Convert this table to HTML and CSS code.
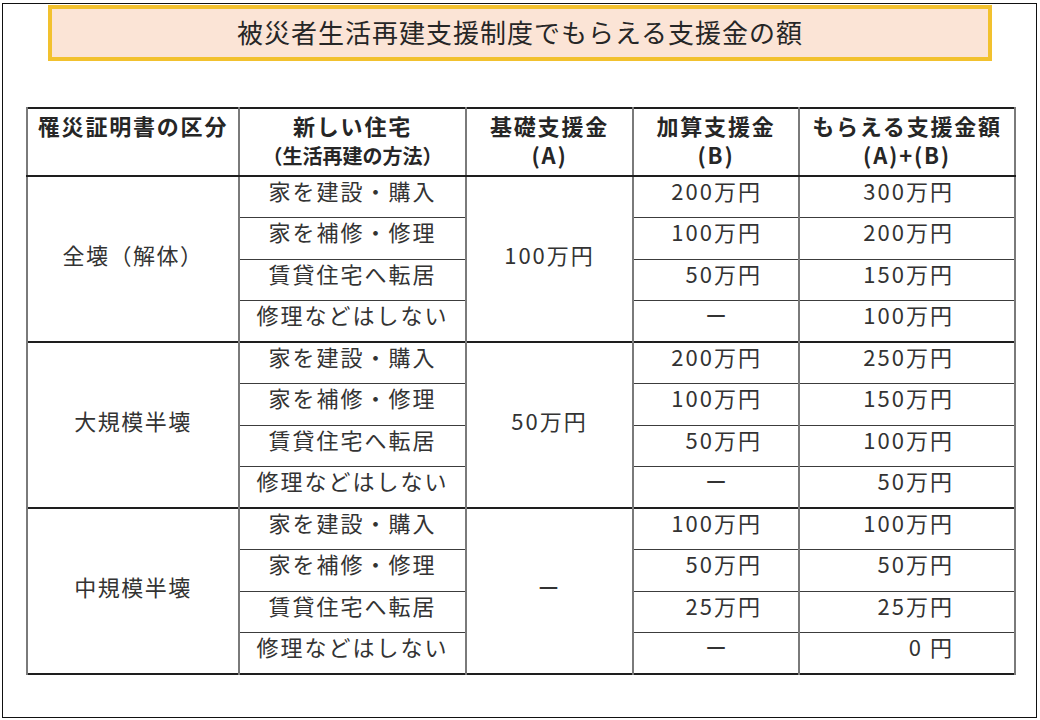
FILE: index.html
```html
<!DOCTYPE html>
<html lang="ja">
<head>
<meta charset="utf-8">
<title>被災者生活再建支援制度でもらえる支援金の額</title>
<link rel="stylesheet" href="styles.css">
</head>
<body>
<div class="frame">
  <div class="title">被災者生活再建支援制度でもらえる支援金の額</div>
  <table class="grid">
    <colgroup>
      <col class="c1"><col class="c2"><col class="c3"><col class="c4"><col class="c5">
    </colgroup>
    <thead>
      <tr>
        <th>罹災証明書の区分</th>
        <th>新しい住宅<br><span class="sub">（生活再建の方法）</span></th>
        <th>基礎支援金<br>(A)</th>
        <th>加算支援金<br>(B)</th>
        <th>もらえる支援金額<br>(A)+(B)</th>
      </tr>
    </thead>
    <tbody>
      <tr class="grp">
        <td class="cat" rowspan="4">全壊（解体）</td>
        <td class="way">家を建設・購入</td>
        <td class="base" rowspan="4">100万円</td>
        <td class="b">200万円</td>
        <td class="ab">300万円</td>
      </tr>
      <tr><td class="way">家を補修・修理</td><td class="b">100万円</td><td class="ab">200万円</td></tr>
      <tr><td class="way">賃貸住宅へ転居</td><td class="b">50万円</td><td class="ab">150万円</td></tr>
      <tr><td class="way">修理などはしない</td><td class="dash">ー</td><td class="ab">100万円</td></tr>

      <tr class="grp">
        <td class="cat" rowspan="4">大規模半壊</td>
        <td class="way">家を建設・購入</td>
        <td class="base" rowspan="4">50万円</td>
        <td class="b">200万円</td>
        <td class="ab">250万円</td>
      </tr>
      <tr><td class="way">家を補修・修理</td><td class="b">100万円</td><td class="ab">150万円</td></tr>
      <tr><td class="way">賃貸住宅へ転居</td><td class="b">50万円</td><td class="ab">100万円</td></tr>
      <tr><td class="way">修理などはしない</td><td class="dash">ー</td><td class="ab">50万円</td></tr>

      <tr class="grp">
        <td class="cat" rowspan="4">中規模半壊</td>
        <td class="way">家を建設・購入</td>
        <td class="base" rowspan="4">ー</td>
        <td class="b">100万円</td>
        <td class="ab">100万円</td>
      </tr>
      <tr><td class="way">家を補修・修理</td><td class="b">50万円</td><td class="ab">50万円</td></tr>
      <tr><td class="way">賃貸住宅へ転居</td><td class="b">25万円</td><td class="ab">25万円</td></tr>
      <tr><td class="way">修理などはしない</td><td class="dash">ー</td><td class="ab">0&nbsp;円</td></tr>
    </tbody>
  </table>
</div>
</body>
</html>
```

FILE: styles.css
```css
html, body {
  margin: 0;
  padding: 0;
  background: #ffffff;
}

body {
  font-family: "Noto Sans CJK JP", "Noto Sans", sans-serif;
  color: #333333;
}

.frame {
  box-sizing: border-box;
  width: 1035px;
  height: 715px;
  margin: 3px 0 0 2px;
  border: 1.5px solid #111111;
  padding: 1px 0 0 23px;
}

.title {
  box-sizing: border-box;
  width: 944px;
  height: 56px;
  margin-left: 22px;
  background: #fbe4d6;
  border: 4px solid #f2c12e;
  font-size: 26px;
  line-height: 46px;
  text-align: center;
  color: #262626;
  letter-spacing: 1px;
}

.grid {
  margin-top: 46px;
  width: 988px;
  border-collapse: collapse;
  table-layout: fixed;
  border: 2px solid #1e1e1e;
}

.c1 { width: 212px; }
.c2 { width: 227px; }
.c3 { width: 167px; }
.c4 { width: 166px; }
.c5 { width: 216px; }

.grid th,
.grid td {
  border-left: 2px solid #7a7a7a;
  border-right: 2px solid #7a7a7a;
  border-top: 1px solid #3c3c3c;
  border-bottom: 1px solid #3c3c3c;
  padding: 0;
  text-align: center;
}

.grid th {
  height: 64px;
  font-size: 22px;
  font-weight: bold;
  color: #262626;
  line-height: 29px;
  letter-spacing: 1.8px;
  vertical-align: top;
  padding-top: 2px;
  border-bottom: 2px solid #1e1e1e;
}

.grid th .sub {
  font-size: 20px;
  letter-spacing: 0;
}

.grid td {
  height: 41.5px;
  font-size: 22px;
  line-height: 26px;
  letter-spacing: 2px;
  padding-bottom: 14px;
  box-sizing: border-box;
}

.grid tr.grp td {
  border-top: 2px solid #1e1e1e;
}

.grid td.cat {
  padding-bottom: 10px;
  letter-spacing: 1.5px;
}

.grid td.base {
  padding-bottom: 10px;
  letter-spacing: 2px;
}

.grid td.b {
  text-align: right;
  padding-right: 36px;
}

.grid td.ab {
  text-align: right;
  padding-right: 60px;
}

.grid td.dash {
  letter-spacing: 0;
}
```
